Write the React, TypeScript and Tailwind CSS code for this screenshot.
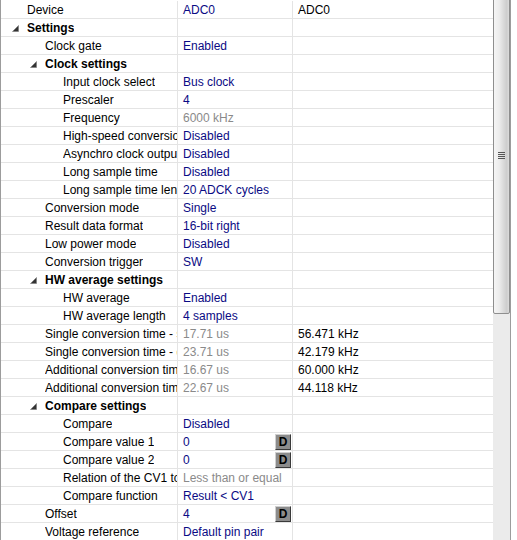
import React from "react";

type Row = {
  label: string;
  level: number;
  header?: boolean;
  value?: string;
  valueTone?: "blue" | "gray";
  extra?: string;
  d?: boolean;
};

const rows: Row[] = [
  { label: "Device", level: 0, value: "ADC0", extra: "ADC0" },
  { label: "Settings", level: 0, header: true },
  { label: "Clock gate", level: 1, value: "Enabled" },
  { label: "Clock settings", level: 1, header: true },
  { label: "Input clock select", level: 2, value: "Bus clock" },
  { label: "Prescaler", level: 2, value: "4" },
  { label: "Frequency", level: 2, value: "6000 kHz", valueTone: "gray" },
  { label: "High-speed conversion", level: 2, value: "Disabled" },
  { label: "Asynchro clock output", level: 2, value: "Disabled" },
  { label: "Long sample time", level: 2, value: "Disabled" },
  { label: "Long sample time length", level: 2, value: "20 ADCK cycles" },
  { label: "Conversion mode", level: 1, value: "Single" },
  { label: "Result data format", level: 1, value: "16-bit right" },
  { label: "Low power mode", level: 1, value: "Disabled" },
  { label: "Conversion trigger", level: 1, value: "SW" },
  { label: "HW average settings", level: 1, header: true },
  { label: "HW average", level: 2, value: "Enabled" },
  { label: "HW average length", level: 2, value: "4 samples" },
  { label: "Single conversion time - single-ended", level: 1, value: "17.71 us", valueTone: "gray", extra: "56.471 kHz" },
  { label: "Single conversion time - differential", level: 1, value: "23.71 us", valueTone: "gray", extra: "42.179 kHz" },
  { label: "Additional conversion time - single-ended", level: 1, value: "16.67 us", valueTone: "gray", extra: "60.000 kHz" },
  { label: "Additional conversion time - differential", level: 1, value: "22.67 us", valueTone: "gray", extra: "44.118 kHz" },
  { label: "Compare settings", level: 1, header: true },
  { label: "Compare", level: 2, value: "Disabled" },
  { label: "Compare value 1", level: 2, value: "0", d: true },
  { label: "Compare value 2", level: 2, value: "0", d: true },
  { label: "Relation of the CV1 to CV2", level: 2, value: "Less than or equal", valueTone: "gray" },
  { label: "Compare function", level: 2, value: "Result < CV1" },
  { label: "Offset", level: 1, value: "4", d: true },
  { label: "Voltage reference", level: 1, value: "Default pin pair" },
];

const labelPad = ["pl-[26px]", "pl-[44px]", "pl-[62px]"];
const headerPad = ["pl-[10px]", "pl-[28px]", "pl-[46px]"];

function Triangle() {
  return (
    <span className="w-[16px] h-[17px] flex items-center shrink-0">
      <svg width="7" height="7" viewBox="0 0 7 7" className="ml-[1px] mt-[2px]">
        <polygon points="6.5,0.5 6.5,6.5 0.5,6.5" fill="#333333" stroke="#7a7a7a" strokeWidth="0.6" />
      </svg>
    </span>
  );
}

function DButton() {
  return (
    <span className="ml-auto mr-[1px] self-center w-[16px] h-[16px] flex items-center justify-center bg-[#8c8c8c] border border-t-[#d0d0d0] border-l-[#d0d0d0] border-r-[#3a3a3a] border-b-[#3a3a3a] text-black font-bold text-[12px] leading-none">
      D
    </span>
  );
}

export default function App() {
  return (
    <div
      className="flex w-[517px] h-[540px] overflow-hidden bg-white text-[12px] text-black"
      style={{ fontFamily: '"Liberation Sans", Arial, sans-serif' }}
    >
      <div className="w-[493px] shrink-0 border-l border-[#9c9c9c] pt-[1px]">
        {rows.map((r, i) => (
          <div key={i} className="flex h-[18px] border-b border-[#e4e4e4] leading-[19px]">
            <div
              className={`w-[177px] h-[17px] shrink-0 border-r border-[#e4e4e4] overflow-hidden whitespace-nowrap flex ${
                r.header ? headerPad[r.level] + " font-bold" : labelPad[r.level]
              }`}
            >
              {r.header && <Triangle />}
              <span className="min-w-0 overflow-hidden">{r.label}</span>
            </div>
            <div
              className={`w-[115px] h-[17px] shrink-0 border-r border-[#e4e4e4] pl-[5px] flex items-start whitespace-nowrap overflow-hidden ${
                r.valueTone === "gray" ? "text-[#8a8a8a]" : "text-[#0a0a84]"
              }`}
            >
              <span>{r.value ?? ""}</span>
              {r.d && <DButton />}
            </div>
            <div className="flex-1 h-[17px] pl-[5px] whitespace-nowrap overflow-hidden text-black">{r.extra ?? ""}</div>
          </div>
        ))}
      </div>
      <div className="w-[17px] shrink-0 flex flex-col bg-[#ebebeb]">
        <div className="h-[318px] -mt-[4px] border border-[#8e8e8e] rounded-[2px] bg-[linear-gradient(to_right,#f5f5f5_0%,#ececec_35%,#d9d9d9_65%,#cdcdcd_85%,#dcdcdc_100%)] flex items-center justify-center">
          <div className="flex flex-col gap-[1px]">
            <div className="w-[7px] h-[1px] bg-[#555]" />
            <div className="w-[7px] h-[1px] bg-[#555]" />
            <div className="w-[7px] h-[1px] bg-[#555]" />
            <div className="w-[7px] h-[1px] bg-[#555]" />
          </div>
        </div>
      </div>
      <div className="w-[1px] shrink-0 bg-[#9c9c9c]" />
      <div className="flex-1 bg-white" />
    </div>
  );
}
